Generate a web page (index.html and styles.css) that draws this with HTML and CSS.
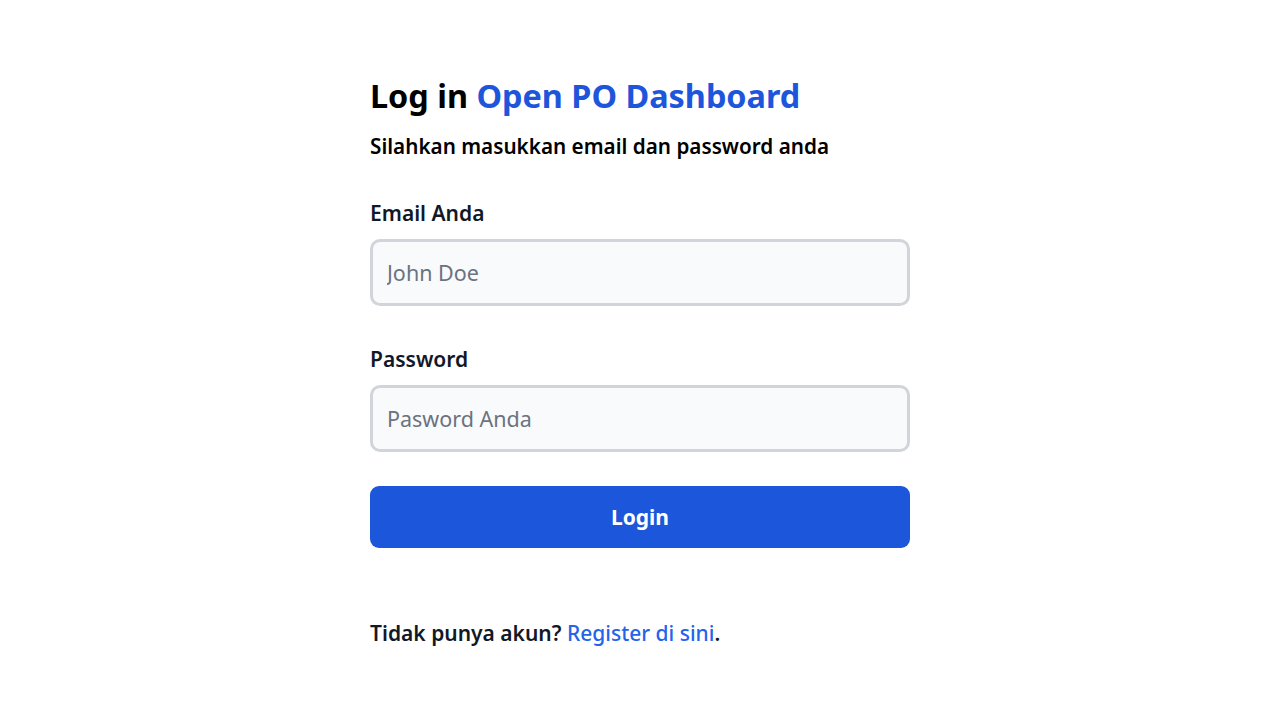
FILE: index.html
```html
<!DOCTYPE html>
<html lang="id">
<head>
<meta charset="utf-8">
<title>Log in Open PO Dashboard</title>
<link rel="stylesheet" href="styles.css">
</head>
<body>
<main class="page">
  <section class="login">
    <h1 class="title">Log in <span class="brand">Open PO Dashboard</span></h1>
    <p class="subtitle">Silahkan masukkan email dan password anda</p>
    <form class="form">
      <div class="field">
        <label class="label" for="email">Email Anda</label>
        <input class="input" id="email" type="email" placeholder="John Doe">
      </div>
      <div class="field">
        <label class="label" for="password">Password</label>
        <input class="input" id="password" type="password" placeholder="Pasword Anda">
      </div>
      <button class="btn" type="button">Login</button>
    </form>
    <p class="footer">Tidak punya akun? <a class="link" href="#">Register di sini</a>.</p>
  </section>
</main>
</body>
</html>
```
FILE: styles.css
```css
* { box-sizing: border-box; }
html, body { margin: 0; padding: 0; background: #ffffff; }
body {
  font-family: "Noto Sans", "Open Sans", "Liberation Sans", sans-serif;
  color: #111827;
}
.page {
  display: flex;
  justify-content: center;
  padding-top: 73px;
}
.login {
  width: 540px;
  display: flex;
  flex-direction: column;
}
.title {
  margin: 0;
  font-size: 32.4px;
  line-height: 44px;
  font-weight: 700;
  color: #000000;
}
.brand { color: #1d56db; }
.subtitle {
  margin: 15px 0 0;
  font-size: 20.7px;
  line-height: 28px;
  font-weight: 600;
  color: #000000;
}
.form {
  display: flex;
  flex-direction: column;
  gap: 34px;
  margin-top: 39px;
}
.field {
  display: flex;
  flex-direction: column;
}
.field + .field { margin-top: 5px; }
.label {
  font-size: 21px;
  line-height: 28px;
  font-weight: 600;
  color: #111827;
  margin-bottom: 12px;
}
.input {
  height: 67px;
  border: 3px solid #d1d5db;
  border-radius: 10px;
  background: #f9fafb;
  padding: 0 14px;
  font-family: inherit;
  font-size: 21.5px;
  color: #111827;
  outline: none;
}
.input::placeholder { color: #6b7280; }
.btn {
  height: 62px;
  border: none;
  border-radius: 9px;
  background: #1c56db;
  color: #ffffff;
  font-family: inherit;
  font-size: 21px;
  font-weight: 700;
  cursor: pointer;
}
.footer {
  margin: 71px 0 0;
  font-size: 21px;
  line-height: 28px;
  font-weight: 600;
  color: #111827;
}
.link {
  color: #2563eb;
  text-decoration: none;
  font-weight: 500;
}
```
